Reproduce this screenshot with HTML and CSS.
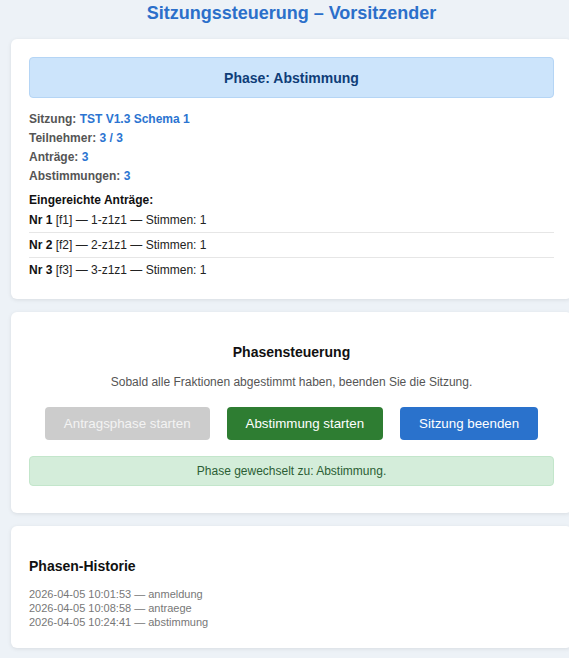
FILE: index.html
```html
<!DOCTYPE html>
<html lang="de">
<head>
<meta charset="utf-8">
<title>Sitzungssteuerung – Vorsitzender</title>
<link rel="stylesheet" href="styles.css">
</head>
<body>
<div class="page">
  <h1 class="title">Sitzungssteuerung – Vorsitzender</h1>

  <section class="card">
    <div class="phase">Phase: Abstimmung</div>
    <div class="info">
      <div class="info-row">Sitzung: <span class="val">TST V1.3 Schema 1</span></div>
      <div class="info-row">Teilnehmer: <span class="val">3 / 3</span></div>
      <div class="info-row">Anträge: <span class="val">3</span></div>
      <div class="info-row">Abstimmungen: <span class="val">3</span></div>
    </div>
    <div class="list-head">Eingereichte Anträge:</div>
    <ul class="antraege">
      <li><b>Nr 1</b> [f1] — 1-z1z1 — Stimmen: 1</li>
      <li><b>Nr 2</b> [f2] — 2-z1z1 — Stimmen: 1</li>
      <li><b>Nr 3</b> [f3] — 3-z1z1 — Stimmen: 1</li>
    </ul>
  </section>

  <section class="card center">
    <h3 class="card-title">Phasensteuerung</h3>
    <p class="hint">Sobald alle Fraktionen abgestimmt haben, beenden Sie die Sitzung.</p>
    <div class="buttons">
      <button class="btn btn-disabled" disabled>Antragsphase starten</button>
      <button class="btn btn-green">Abstimmung starten</button>
      <button class="btn btn-blue">Sitzung beenden</button>
    </div>
    <div class="msg">Phase gewechselt zu: Abstimmung.</div>
  </section>

  <section class="card">
    <h3 class="card-title">Phasen-Historie</h3>
    <ul class="history">
      <li>2026-04-05 10:01:53 — anmeldung</li>
      <li>2026-04-05 10:08:58 — antraege</li>
      <li>2026-04-05 10:24:41 — abstimmung</li>
    </ul>
  </section>
</div>
</body>
</html>
```

FILE: styles.css
```css
html, body {
  margin: 0;
  padding: 0;
  overflow-x: hidden;
}
body {
  background: #edf2f7;
  font-family: "Liberation Sans", Arial, sans-serif;
  color: #222;
}
.page {
  width: 561px;
  margin-left: 11px;
  padding-top: 3px;
}
.title {
  margin: 0 0 15px;
  font-size: 18px;
  line-height: 21px;
  font-weight: bold;
  color: #2b6fca;
  text-align: center;
}
.card {
  background: #fff;
  border-radius: 6px;
  box-shadow: 0 1px 4px rgba(0, 0, 0, 0.09);
  padding: 18px 18px 17px;
  margin-bottom: 13px;
}
.center {
  text-align: center;
}
.phase {
  background: #cce4fb;
  border: 1px solid #b5d5f5;
  border-radius: 4px;
  height: 39px;
  display: flex;
  align-items: center;
  justify-content: center;
  font-size: 14px;
  font-weight: bold;
  color: #0f3d78;
}
.info {
  margin-top: 12px;
}
.info-row {
  font-size: 12px;
  line-height: 19px;
  font-weight: bold;
  color: #555;
}
.val {
  color: #2b74d1;
}
.list-head {
  margin-top: 7px;
  font-size: 12px;
  line-height: 15px;
  font-weight: bold;
  color: #111;
}
.antraege {
  list-style: none;
  margin: 0;
  padding: 0;
}
.antraege li {
  font-size: 12px;
  line-height: 18px;
  padding: 3px 0;
  border-bottom: 1px solid #e6e6e6;
  color: #222;
}
.antraege li:last-child {
  border-bottom: none;
}
.antraege b {
  color: #111;
}
.card-title {
  margin: 14px 0;
  font-size: 14px;
  line-height: 17px;
  font-weight: bold;
  color: #111;
}
.hint {
  margin: 0;
  font-size: 12px;
  line-height: 14px;
  color: #555;
}
.buttons {
  display: flex;
  justify-content: center;
  gap: 17px;
  margin-top: 18px;
}
.btn {
  font-family: "Liberation Sans", Arial, sans-serif;
  font-size: 13.333px;
  line-height: 17px;
  padding: 8px 19px;
  border: none;
  border-radius: 4px;
  color: #fff;
}
.btn-disabled {
  background: #cccccc;
  color: #f3f3f3;
}
.btn-green {
  background: #2e7d32;
}
.btn-blue {
  background: #2a72cc;
}
.msg {
  margin-top: 16px;
  margin-bottom: 10px;
  height: 28px;
  display: flex;
  align-items: center;
  justify-content: center;
  background: #d4edda;
  border: 1px solid #c3e6cb;
  border-radius: 4px;
  font-size: 12px;
  color: #2b5e34;
}
.history {
  list-style: none;
  margin: -2px 0 2px;
  padding: 0;
}
.history li {
  font-size: 11px;
  line-height: 14px;
  color: #777;
}
```
